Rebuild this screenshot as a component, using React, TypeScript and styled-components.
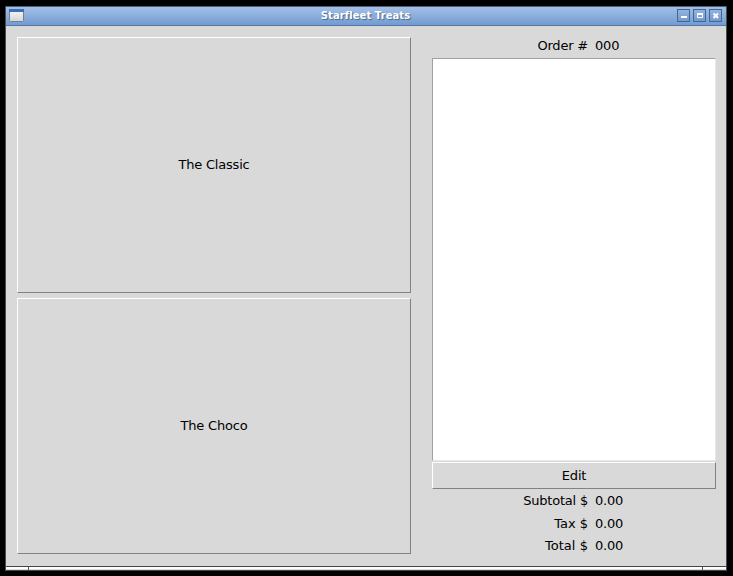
import React from "react";
import styled, { createGlobalStyle } from "styled-components";

const GlobalStyle = createGlobalStyle`
  * { box-sizing: border-box; }
  body { margin: 0; background: #000; overflow: hidden; }
`;

const Desktop = styled.div`
  width: 733px;
  height: 576px;
  padding: 6px 6px 5px 5px;
  background: #000;
  font: 13px "DejaVu Sans", sans-serif;
  letter-spacing: -0.2px;
  color: #000;
`;

const Window = styled.div`
  height: 565px;
  display: flex;
  flex-direction: column;
  border: 1px solid #4c4c4c;
  border-top: 0;
  background: #d9d9d9;
`;

const TitleBar = styled.header`
  height: 20px;
  flex: none;
  display: grid;
  grid-template-columns: 53px 1fr 54px;
  align-items: start;
  border-top: 1px solid #4a5a73;
  border-bottom: 1px solid #5377aa;
  background: linear-gradient(#a3c0e6, #739bd0);
`;

const Title = styled.h1`
  margin: 0;
  font-size: 10px;
  letter-spacing: 0.08px;
  line-height: 18px;
  text-align: center;
  color: #fff;
  text-shadow: 1px 1px 1px #48648c;
`;

const WindowIcon = styled.svg`
  display: block;
  margin: 2px 0 0 3px;
`;

const Controls = styled.div`
  display: flex;
  gap: 3px;
  padding: 2px 0 0 5px;
`;

const ControlButton = styled.button`
  width: 13px;
  height: 13px;
  padding: 0;
  border: 1px solid #426698;
  background: linear-gradient(#94b4df, #7299cd);
  svg { display: block; }
`;

const Content = styled.main`
  height: 540px;
  flex: none;
  display: grid;
  grid-template-columns: 394px 284px;
  column-gap: 21px;
  padding: 11px 10px 12px 11px;
`;

const TreatList = styled.section`
  display: grid;
  grid-template-rows: 256px 256px;
  row-gap: 5px;
`;

const RaisedButton = styled.button<{ $height: number; $lift?: number }>`
  height: ${(p) => p.$height}px;
  width: 100%;
  padding: 0 0 ${(p) => p.$lift ?? 0}px;
  border: 1px solid;
  border-color: #fff #828282 #828282 #fff;
  background: #d9d9d9;
  font: inherit;
  letter-spacing: inherit;
  color: inherit;
`;

const OrderPanel = styled.aside`
  display: flex;
  flex-direction: column;
`;

const Field = styled.div<{ $height: number }>`
  height: ${(p) => p.$height}px;
  line-height: ${(p) => p.$height}px;
  flex: none;
  display: grid;
  grid-template-columns: 156px 1fr;
  column-gap: 7px;
  white-space: nowrap;
`;

const Label = styled.span<{ $tracking?: number }>`
  text-align: right;
  letter-spacing: ${(p) => p.$tracking ?? -0.2}px;
`;

const OrderHeader = styled.div`
  height: 21px;
  flex: none;
  > div { margin-top: -1px; }
`;

const OrderItems = styled.div`
  height: 403px;
  flex: none;
  margin-bottom: 1px;
  border: 1px solid;
  border-color: #a0a0a0 #e9e9e9 #e9e9e9 #a0a0a0;
  background: #fff;
`;

const Totals = styled.div`
  padding-top: 1px;
`;

const ResizeBar = styled.footer`
  height: 5px;
  flex: none;
  display: grid;
  grid-template-columns: 22px 1fr 24px;
  border-top: 1px solid #454545;
  border-bottom: 1px solid #454545;
`;

const Grip = styled.span`
  background: linear-gradient(#fff 50%, #c4c9cd);
  & + & { border-left: 1px solid #555; }
`;

const totals = [
  { label: "Subtotal $", value: "0.00", height: 22, tracking: -0.2 },
  { label: "Tax $", value: "0.00", height: 23, tracking: 0 },
  { label: "Total $", value: "0.00", height: 22, tracking: 0.05 },
];

export default function App() {
  return (
    <Desktop>
      <GlobalStyle />
      <Window>
        <TitleBar>
          <WindowIcon width="15" height="13" viewBox="0 0 15 13">
            <defs>
              <linearGradient id="pane" x2="0" y2="1">
                <stop stopColor="#fafafa" />
                <stop offset="1" stopColor="#d4d4d0" />
              </linearGradient>
            </defs>
            <rect x=".5" y=".5" width="14" height="12" rx="1" fill="url(#pane)" stroke="#6b7f9f" />
            <path d="M0 0h15v3H0z" fill="#3c6db5" />
          </WindowIcon>
          <Title>Starfleet Treats</Title>
          <Controls>
            <ControlButton aria-label="Minimize">
              <svg width="11" height="11"><path d="M3 6h6v2H3z" fill="#fff" /></svg>
            </ControlButton>
            <ControlButton aria-label="Maximize">
              <svg width="11" height="11"><path d="M3.5 4.5h5v3h-5z" fill="none" stroke="#fff" /><path d="M3 3.5h6" stroke="#fff" /></svg>
            </ControlButton>
            <ControlButton aria-label="Close">
              <svg width="11" height="11"><path d="M3.5 3.5l4.5 4.5m0-4.5l-4.5 4.5" stroke="#fff" strokeWidth="2" /></svg>
            </ControlButton>
          </Controls>
        </TitleBar>
        <Content>
          <TreatList>
            <RaisedButton $height={256} $lift={2}>The Classic</RaisedButton>
            <RaisedButton $height={256} $lift={2}>The Choco</RaisedButton>
          </TreatList>
          <OrderPanel>
            <OrderHeader>
              <Field $height={20}><Label>Order #</Label><span>000</span></Field>
            </OrderHeader>
            <OrderItems />
            <RaisedButton $height={27}>Edit</RaisedButton>
            <Totals>
              {totals.map((t) => (
                <Field key={t.label} $height={t.height}>
                  <Label $tracking={t.tracking}>{t.label}</Label>
                  <span>{t.value}</span>
                </Field>
              ))}
            </Totals>
          </OrderPanel>
        </Content>
        <ResizeBar><Grip /><Grip /><Grip /></ResizeBar>
      </Window>
    </Desktop>
  );
}
